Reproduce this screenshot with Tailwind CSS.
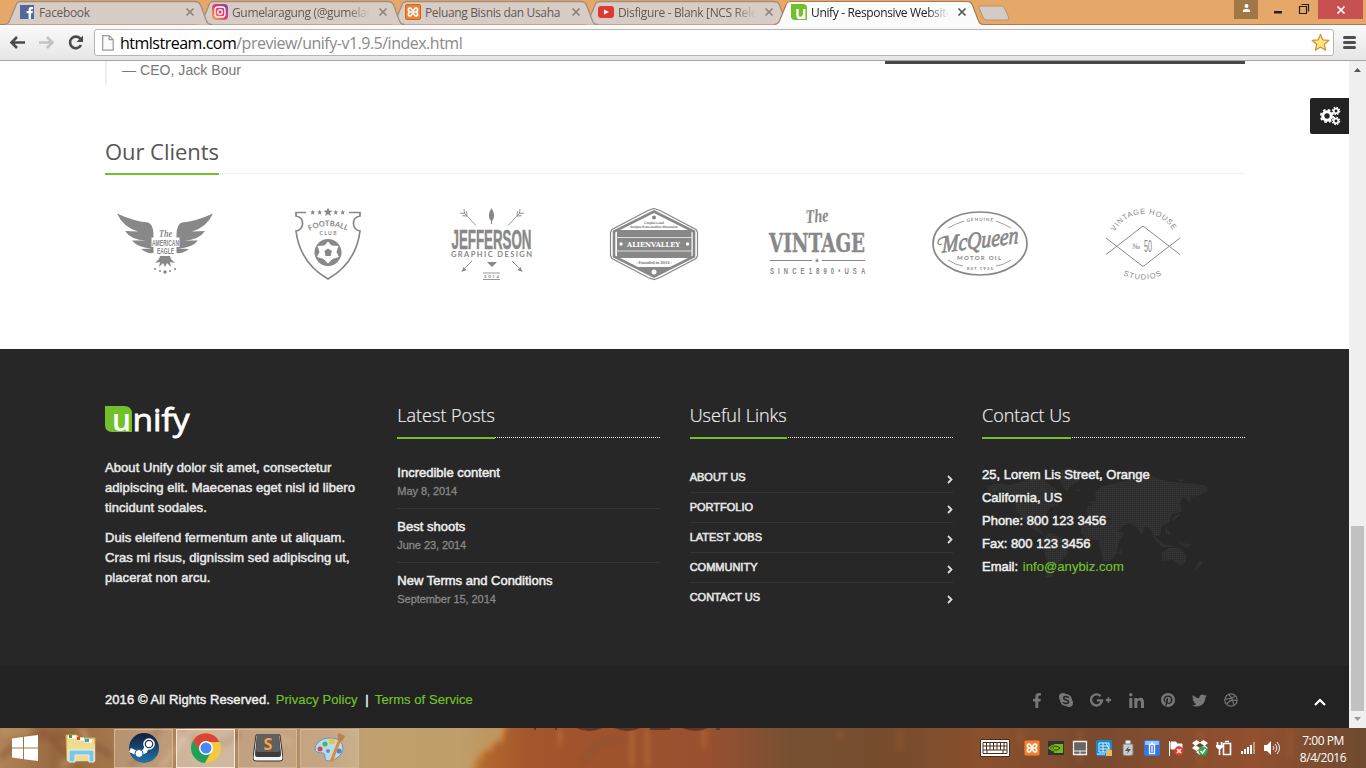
<!DOCTYPE html>
<html lang="en">
<head>
<meta charset="utf-8">
<title>Unify - Responsive Website Template</title>
<script src="https://cdn.jsdelivr.net/npm/@tailwindcss/browser@4"></script>
</head>
<body class="bg-white">
<svg class="hidden">
  <defs>
    <symbol id="x" viewBox="0 0 10 10"><path d="M1.500 1.500l7 7M8.500 1.500l-7 7" stroke="currentColor" stroke-width="1.700"/></symbol>
    <symbol id="xampp" viewBox="0 0 16 16"><rect x=".5" y=".5" width="15" height="15" rx="1.500" fill="#f08236" stroke="#cf6420"/><path d="M5.500 4.200C3 3.200 2.800 6.300 4.600 8C2.800 9.700 3 12.800 5.500 11.800M10.500 4.200C13 3.200 13.200 6.300 11.400 8C13.200 9.700 13 12.800 10.500 11.800M5.500 4.200C7 4.200 6.200 6.500 8 6.500S9 4.200 10.500 4.200M5.500 11.800C7 11.800 6.200 9.500 8 9.500S9 11.800 10.500 11.800M5 8h6" fill="none" stroke="#fff" stroke-width="1.700"/></symbol>
    <symbol id="tab" viewBox="0 0 210 25"><path d="M0 24.500C5 24 5 22 7 17L12 5C13 2 14 1.500 17 1.500H190C194 1.500 195 2 196.500 5L201 17C203 22 203 24.500 208 24.500" fill="#d8cdc6" stroke="#a38e7b" stroke-width="1.300"/></symbol>
    <symbol id="chev" viewBox="0 0 6 9"><path d="M1 1l3.500 3.500L1 8" fill="none" stroke="#ddd" stroke-width="1.800"/></symbol>
  </defs>
</svg>
<div class="flex h-[768px] w-[1366px] flex-col overflow-hidden bg-white">

  <!-- tab strip -->
  <div class="relative flex h-[25px] shrink-0 items-center border-b border-[#a87c50] bg-[#e5a868] pl-[20px] font-['Open_Sans',sans-serif] text-[12px] tracking-[-0.35px] text-[#635a53]">
    <svg class="absolute left-[583px] top-0 h-[25px] w-[210px]"><use href="#tab"/></svg>
    <svg class="absolute left-[390px] top-0 h-[25px] w-[210px]"><use href="#tab"/></svg>
    <svg class="absolute left-[197px] top-0 h-[25px] w-[210px]"><use href="#tab"/></svg>
    <svg class="absolute left-[4px] top-0 h-[25px] w-[210px]"><use href="#tab"/></svg>
    <svg class="absolute left-[774px] top-0 h-[26px] w-[240px]" viewBox="0 0 240 26"><path d="M0 26V24.500C5 24 5 22 7 17L12 5C13 2 14 1.500 17 1.500H192C196 1.500 197 2 198.500 5L203 17C205 22 205 24.500 210 24.500V26Z" fill="#fbfbfb"/><path d="M0 24.500C5 24 5 22 7 17L12 5C13 2 14 1.500 17 1.500H192C196 1.500 197 2 198.500 5L203 17C205 22 205 24.500 210 24.500" fill="none" stroke="#a87c50" stroke-width="1.200"/><path d="M206 6h22q2 0 3 3l4 9q0 2-2 2h-20q-3 0-4-3l-4-9q-.5-2 1-2z" fill="#d4cbc6" stroke="#b39373"/></svg>
    <div class="relative flex w-[193px] items-center">
      <svg class="h-[14px] w-[14px]" viewBox="0 0 14 14"><path d="M0 0h14v14H0z" fill="#56679b"/><path d="M8.600 14V8.300h-2V6h2V4.300Q8.600 2 11 2h2v2.200h-1.300q-.8 0-.8.900V6h2l-.3 2.300h-1.700V14z" fill="#fff"/></svg>
      <span class="ml-[5px] mt-[2px] w-[146px] whitespace-nowrap">Facebook</span><svg class="h-[10px] w-[10px] text-[#8c827c]"><use href="#x"/></svg>
    </div>
    <div class="relative flex w-[193px] items-center">
      <svg class="-ml-px h-4 w-4" viewBox="0 0 16 16"><defs><linearGradient id="ig" x1="0" y1="1" x2="1" y2="0"><stop stop-color="#fdb84c"/><stop offset=".5" stop-color="#e23c68"/><stop offset="1" stop-color="#7d42bd"/></linearGradient></defs><rect width="16" height="16" rx="4" fill="url(#ig)"/><rect x="3" y="3" width="10" height="10" rx="3" fill="none" stroke="#fff" stroke-width="1.300"/><circle cx="8" cy="8" r="2.300" fill="none" stroke="#fff" stroke-width="1.300"/></svg>
      <span class="ml-1 mt-[2px] w-[138px] overflow-hidden whitespace-nowrap [mask-image:linear-gradient(to_right,#000_84%,transparent)]">Gumelaragung (@gumelaragung)</span><svg class="ml-[8px] h-[10px] w-[10px] text-[#8c827c]"><use href="#x"/></svg>
    </div>
    <div class="relative flex w-[193px] items-center">
      <svg class="-ml-px h-4 w-4"><use href="#xampp"/></svg>
      <span class="ml-1 mt-[2px] w-[138px] overflow-hidden whitespace-nowrap">Peluang Bisnis dan Usaha</span><svg class="ml-[8px] h-[10px] w-[10px] text-[#8c827c]"><use href="#x"/></svg>
    </div>
    <div class="relative flex w-[193px] items-center">
      <svg class="-ml-px h-4 w-4" viewBox="0 0 16 16"><rect y="2" width="16" height="12" rx="3" fill="#dc3b32"/><path d="M6 5.500l5 2.500-5 2.500z" fill="#fff"/></svg>
      <span class="ml-1 mt-[2px] w-[138px] overflow-hidden whitespace-nowrap [mask-image:linear-gradient(to_right,#000_84%,transparent)]">Disfigure - Blank [NCS Release]</span><svg class="ml-[8px] h-[10px] w-[10px] text-[#8c827c]"><use href="#x"/></svg>
    </div>
    <div class="relative flex w-[193px] items-center text-[#222]">
      <svg class="-ml-px h-4 w-4" viewBox="0 0 16 16"><path d="M0 0h12q4 0 4 4v12H4q-4 0-4-4z" fill="#72c02c"/><path d="M6.500 5v6q0 3 2.500 3 3 0 3.500-2.500M13.200 5v10" fill="none" stroke="#fff" stroke-width="2.400"/></svg>
      <span class="ml-1 mt-[2px] w-[138px] overflow-hidden whitespace-nowrap [mask-image:linear-gradient(to_right,#000_84%,transparent)]">Unify - Responsive Website Template</span><svg class="ml-[8px] h-[10px] w-[10px] text-[#555]"><use href="#x"/></svg>
    </div>
    <div class="ml-auto mr-[3px] flex h-[19px] items-center self-start">
      <div class="flex h-full w-6 items-center justify-center bg-[#a27748]"><svg class="-mt-[3px] h-[9px] w-[9px]" viewBox="0 0 10 10" fill="#fff"><circle cx="5" cy="2.300" r="2.200"/><path d="M1 9V7.500q0-2 4-2t4 2V9z"/></svg></div>
      <svg class="h-[19px] w-[60px]" viewBox="0 0 60 19"><path d="M16 11h8v2.500h-8z" fill="#222"/><path d="M41.500 6.500h7v7h-7zM43.500 4.500h7v7" fill="none" stroke="#222" stroke-width="1.200"/></svg>
      <div class="flex h-full w-[45px] items-center justify-center bg-[#c75050] text-white"><svg class="h-[10px] w-[10px]"><use href="#x"/></svg></div>
    </div>
  </div>

  <!-- toolbar -->
  <div class="flex h-[36px] shrink-0 items-center border-b border-[#a5a5a5] bg-linear-to-b from-[#fafafa] to-[#e6e6e6] pl-[9px]">
    <svg class="h-[18px] w-[76px]" viewBox="9 34 76 18" fill="none" stroke-width="2.600"><path d="M25 42.500H12M17 37l-5.500 5.500L17 48" stroke="#4a4a4a"/><path d="M39 42.500h13M47 37l5.500 5.500L47 48" stroke="#c3c3c3"/><path d="M80.500 39a5.800 5.800 0 1 0 .5 6" stroke="#4a4a4a"/><path d="M83 35.500V42h-6.500z" fill="#4a4a4a"/></svg>
    <div class="ml-[9px] flex h-[27px] w-[1240px] items-center rounded-[3px] border border-[#b5b5b5] bg-white pl-[7px] font-['Open_Sans',sans-serif] text-[16px] leading-[22px] tracking-[-0.5px] text-[#8a8a8a]">
      <svg class="h-4 w-3" viewBox="0 0 12 16"><path d="M.7.700h6.500l4 4v10.500H.7zM7.200.700v4h4" fill="#fafafa" stroke="#999" stroke-width="1.200"/></svg>
      <span class="ml-[6px] whitespace-nowrap"><span class="text-black">htmlstream.com</span>/preview/unify-v1.9.5/index.html</span>
      <svg class="ml-auto mr-[3px] h-[19px] w-[19px]" viewBox="0 0 20 20"><path d="M10 1.500l2.500 5.700 6.200.6-4.700 4.100 1.400 6.100L10 14.800 4.600 18 6 11.900 1.300 7.800l6.200-.6z" fill="#ffe480" stroke="#cf9338" stroke-width="1.300" stroke-linejoin="round"/></svg>
    </div>
    <div class="ml-[9px] flex w-[13px] flex-col gap-[2px]"><i class="h-[3px] rounded bg-[#4f4f4f]"></i><i class="h-[3px] rounded bg-[#4f4f4f]"></i><i class="h-[3px] rounded bg-[#4f4f4f]"></i></div>
  </div>

  <div class="flex h-[667px] shrink-0">
    <main class="relative flex w-[1349px] flex-col font-['Liberation_Sans',Arial,sans-serif]">
      <div class="h-[288px] pl-[105px]">
        <div class="flex w-[1140px] items-start justify-between">
          <div class="h-[24px] border-l-2 border-[#eee] pl-[15px] text-[14px] leading-[18px] tracking-[0.05px] text-[#777]">— CEO, Jack Bour</div>
          <div class="h-[3px] w-[360px] bg-[#484848]"></div>
        </div>
        <div class="mt-[53px] h-[36px] w-[1140px] border-b border-dotted border-[#e4e4e4]">
          <h2 class="inline-block h-[37px] w-[114px] whitespace-nowrap border-b-2 border-[#72c02c] font-['Open_Sans',sans-serif] text-[22px] leading-[27px] tracking-[-0.05px] text-[#555]">Our Clients</h2>
        </div>
        <div class="mt-[26px] flex gap-[43px] text-[#888]">
          <svg class="h-[90px] w-[120px]" viewBox="105 200 120 90" fill="currentColor">
            <path id="wing" d="M117 213.500Q133 221 148 222.500Q153 224 153.500 234V253Q147 254 141 249L152 248.500Q138 248 132 240.500L146 240.500Q131 240 125 231L138 231.500Q123 227 117 213.500Z"/><use href="#wing" transform="translate(330 0) scale(-1 1)"/>
            <path d="M160 256h10l1 3 4 4-5-1 1 5-4-4-2 4-2-4-4 4 1-5-5 1 4-4z"/><circle cx="155" cy="269" r="1"/><circle cx="160" cy="271" r="1"/><circle cx="165" cy="272" r="1.700"/><circle cx="170" cy="271" r="1"/><circle cx="175" cy="269" r="1"/>
            <path d="M151.500 237.500h28v9.500h-28zM156 246.500h18v8h-18z" fill="#fff"/>
            <text x="159" y="237" font-family="Liberation Serif" font-style="italic" font-weight="bold" font-size="10" textLength="13" lengthAdjust="spacingAndGlyphs">The</text>
            <text x="152" y="246" font-family="Liberation Sans" font-weight="bold" font-size="9.500" textLength="27" lengthAdjust="spacingAndGlyphs">AMERICAN</text>
            <text x="157" y="254" font-family="Liberation Sans" font-weight="bold" font-size="9" textLength="17" lengthAdjust="spacingAndGlyphs">EAGLE</text>
          </svg>
          <svg class="h-[90px] w-[120px]" viewBox="268 200 120 90" fill="currentColor">
            <path d="M306 212.500H296V216Q303 217 302.500 224Q302 230 296 231Q300 263 328 279Q356 263 360 231Q354 230 353.500 224Q353 217 360 216V212.500H349" fill="none" stroke="currentColor" stroke-width="1.700"/>
            <path id="star" d="M328 207.500l1.300 3 3.200.2-2.500 2 .8 3.200-2.800-1.700-2.800 1.700.8-3.200-2.500-2 3.200-.2z"/><use href="#star" transform="translate(132.300 85.200) scale(.55 .6)"/><use href="#star" transform="translate(139.300 85.200) scale(.55 .6)"/><use href="#star" transform="translate(155.300 85.200) scale(.55 .6)"/><use href="#star" transform="translate(162.300 85.200) scale(.55 .6)"/>
            <path id="arc1" d="M309.500 231Q328 221 347.500 231" fill="none"/><text font-family="Lato" font-weight="bold" font-size="7.500"><textPath href="#arc1" textLength="39">FOOTBALL</textPath></text>
            <text x="319.500" y="234.500" font-family="Lato" font-weight="bold" font-size="5" textLength="17">CLUB</text>
            <circle cx="328" cy="252.500" r="13.500"/><path d="M328 241.500l3.500 4 7 .5-2 6 2.500 5-6.500 2-4.500 4.500-4.500-4.500-6.500-2 2.500-5-2-6 7-.5z" fill="#fff"/><path d="M324.500 251l3.500-2.500 4 2.500-1.500 5h-5z"/>
          </svg>
          <svg class="h-[90px] w-[120px]" viewBox="431 200 120 90" fill="currentColor">
            <path d="M491.500 208q4.500 7 1.300 12l-.8 1v3h-1v-3l-.8-1q-3.200-5 1.300-12zM487 262h10l-5 5z"/>
            <path d="M476 225.500L464.500 213.500l-4.500-.3M464.500 213.500l-.5-4.500M467 216l-4.500-.3M467 216l-.5-4.500M508 225.500L519.500 213.500l4.500-.3M519.500 213.500l.5-4.500M517 216l4.500-.3M517 216l.5-4.500M472 261l-9 9M512 261l9 9M483 273h17M483 279.500h17" fill="none" stroke="currentColor" stroke-width=".9"/><path d="M461.500 272l2-5 3 3zM522.500 272l-2-5-3 3z"/>
            <text x="451.500" y="248.500" font-family="Liberation Sans" font-weight="bold" font-size="27" textLength="80" lengthAdjust="spacingAndGlyphs" stroke="currentColor" stroke-width=".5">JEFFERSON</text>
            <text x="451" y="257.300" font-family="Lato" font-weight="bold" font-size="7.500" textLength="81">GRAPHIC DESIGN</text><text x="484" y="278" font-family="Lato" font-weight="bold" font-size="4.500" textLength="15">2014</text>
          </svg>
          <svg class="h-[90px] w-[120px]" viewBox="594 200 120 90" fill="currentColor">
            <path d="M654 208.500l6 2 36 19 1.500 3v23l-1.500 3-36 19-6 2-6-2-36-19-1.500-3v-23l1.500-3 36-19z" fill="#fff" stroke="currentColor" stroke-width="1.200"/>
            <path d="M654 211.500l40 20v25l-40 20-40-20v-25z" fill="#fff" stroke="currentColor" stroke-width="2.600"/><path d="M635 267h38l-19 10zM617 230h74.500v28H617z"/><path d="M616 237.500h77M616 251h77" stroke="#ddd"/>
            <circle cx="654" cy="217.500" r="2"/><circle cx="654" cy="272" r="2.500" fill="#fff"/><circle cx="621" cy="244" r="1.700" fill="#fff"/><circle cx="687.500" cy="244" r="1.700" fill="#fff"/>
            <text x="627" y="247" font-family="DejaVu Serif" font-weight="bold" fill="#fff" font-size="8" textLength="53" lengthAdjust="spacingAndGlyphs">ALIENVALLEY</text>
            <g font-family="DejaVu Serif" font-weight="bold" font-size="3.300"><text x="644" y="223.500" textLength="20">Graphics and</text><text x="630" y="227.500" textLength="48">designs from another dimension</text><text x="636" y="264" font-size="4" textLength="36">- Founded in 2014 -</text></g>
          </svg>
          <svg class="h-[90px] w-[120px]" viewBox="757 200 120 90" fill="currentColor">
            <text transform="translate(806 223) rotate(-4)" font-family="Liberation Serif" font-style="italic" font-weight="bold" font-size="19" textLength="23" lengthAdjust="spacingAndGlyphs">The</text>
            <text x="769" y="251.500" font-family="DejaVu Serif" font-weight="bold" font-size="26" textLength="96" lengthAdjust="spacingAndGlyphs" stroke="currentColor" stroke-width=".4">VINTAGE</text>
            <path d="M770 260.500h42M822 260.500h43" stroke="currentColor" stroke-width="1.200"/><use href="#star" transform="translate(653 154.500) scale(.5)"/>
            <g transform="translate(770 273.800) scale(.7 1)"><text font-family="Liberation Sans" font-size="8.500" font-weight="bold" textLength="136">SINCE1890•USA</text></g>
          </svg>
          <svg class="h-[90px] w-[120px]" viewBox="920 200 120 90" fill="currentColor">
            <ellipse cx="980" cy="243.500" rx="47" ry="31.500" fill="none" stroke="currentColor" stroke-width="1.700"/>
            <path id="q1" d="M967 222q13-2.500 28 0" fill="none"/><text font-size="4.500" font-family="Lato" font-weight="bold"><textPath href="#q1" textLength="26">GENUINE</textPath></text>
            <text x="967" y="270" font-size="4.500" font-family="Lato" font-weight="bold" textLength="26">EST.1935</text>
            <path d="M948 228q7-4 16-7M1011 228q-7-4-15-7M948 260q7 5 15 6M1011 260q-7 5-15 6" fill="none" stroke="currentColor" stroke-width=".8"/>
            <text transform="translate(942 252.500) rotate(-7) skewX(-8)" font-family="Liberation Serif" font-style="italic" font-size="24" textLength="77" lengthAdjust="spacingAndGlyphs" stroke="currentColor" stroke-width=".8">McQueen</text>
            <path d="M947 237q-8 0-9 5 0 4 4 2" fill="none" stroke="currentColor" stroke-width="1.300"/>
            <text x="957" y="259.500" font-size="6" font-family="Lato" font-weight="bold" textLength="44">MOTOR OIL</text>
          </svg>
          <svg class="h-[90px] w-[120px]" viewBox="1083 200 120 90" fill="currentColor">
            <path d="M1106 238l37 28.500L1180 238M1106 254.500l37-28.500 37 28.500" fill="none" stroke="currentColor" stroke-width="1"/>
            <path id="v1" d="M1115 231.500A33 33 0 0 1 1172 229" fill="none"/><text font-family="Liberation Sans Narrow,Liberation Sans" font-size="7.500"><textPath href="#v1" textLength="70">VINTAGE HOUSE</textPath></text>
            <path id="v2" d="M1123 275q20 9 39 0" fill="none"/><text font-family="Liberation Sans Narrow,Liberation Sans" font-size="7.500"><textPath href="#v2" textLength="40">STUDIOS</textPath></text>
            <text x="1132" y="248.500" font-size="8" font-family="Liberation Serif" textLength="8" lengthAdjust="spacingAndGlyphs">№</text><text x="1144" y="252" font-size="16" font-family="Liberation Sans" textLength="8" lengthAdjust="spacingAndGlyphs">50</text>
          </svg>
        </div>
      </div>

      <!-- floating controls -->
      <div class="absolute right-0 top-[37px] flex h-[36px] w-[39px] items-center justify-center rounded-l-[2px] bg-[#222]">
        <svg class="h-5 w-[22px]" viewBox="0 0 22 20" fill="none" stroke="#fff"><circle cx="8" cy="10" r="4.200" stroke-width="3"/><circle cx="8" cy="10" r="6.200" stroke-width="1.800" stroke-dasharray="2.600 2.270"/><circle cx="17" cy="5" r="2.300" stroke-width="1.700"/><circle cx="17" cy="5" r="3.700" stroke-width="1.200" stroke-dasharray="1.600 1.300"/><circle cx="17" cy="15" r="2.300" stroke-width="1.700"/><circle cx="17" cy="15" r="3.700" stroke-width="1.200" stroke-dasharray="1.600 1.300"/></svg>
      </div>

      <!-- footer -->
      <footer class="grid h-[317px] grid-cols-4 gap-[29.33px] border-b border-[#252525] bg-[#272727] pl-[105px] pr-[104px] pt-[56px] text-[13px] text-[#eee]">
        <section>
          <svg class="mt-px h-[34px] w-[90px]" viewBox="0 0 90 34"><path d="M0 0h19q8 0 8 8v18H7q-7 0-7-7z" fill="#72c02c"/><g font-family="Open Sans" font-size="31" fill="#fff"><text x="7" y="25" font-weight="600" textLength="19" lengthAdjust="spacingAndGlyphs">u</text><text x="27.500" y="25" textLength="57" lengthAdjust="spacingAndGlyphs" stroke="#fff" stroke-width=".8">nify</text></g></svg>
          <div class="mt-[18px] whitespace-nowrap leading-[20px] tracking-[0.08px] [-webkit-text-stroke:0.5px_#e4e4e4]">
            <p>About Unify dolor sit amet, consectetur<br>adipiscing elit. Maecenas eget nisl id libero<br>tincidunt sodales.</p>
            <p class="mt-[10px]">Duis eleifend fermentum ante ut aliquam.<br>Cras mi risus, dignissim sed adipiscing ut,<br>placerat non arcu.</p>
          </div>
        </section>
        <section>
          <div class="h-[33px] border-b border-dotted border-white"><h3 class="h-[34px] w-[98px] whitespace-nowrap border-b-2 border-[#72c02c] font-['Open_Sans',sans-serif] text-[18px] font-light leading-[21px] [-webkit-text-stroke:0.2px]">Latest Posts</h3></div>
          <div class="mt-[25px] whitespace-nowrap [-webkit-text-stroke:0.5px]">
            <div class="h-[46px] border-b border-[#353535]"><p class="leading-[19px]">Incredible content</p><p class="text-[11px] leading-[19px] tracking-[-0.07px] text-[#888] [-webkit-text-stroke:0.3px]">May 8, 2014</p></div>
            <div class="h-[54px] border-b border-[#353535] pt-[8px]"><p class="leading-[19px]">Best shoots</p><p class="text-[11px] leading-[19px] tracking-[-0.07px] text-[#888] [-webkit-text-stroke:0.3px]">June 23, 2014</p></div>
            <div class="h-[54px] pt-[8px]"><p class="leading-[19px]">New Terms and Conditions</p><p class="text-[11px] leading-[19px] tracking-[-0.07px] text-[#888] [-webkit-text-stroke:0.3px]">September 15, 2014</p></div>
          </div>
        </section>
        <section>
          <div class="h-[33px] border-b border-dotted border-white"><h3 class="h-[34px] w-[97px] whitespace-nowrap border-b-2 border-[#72c02c] font-['Open_Sans',sans-serif] text-[18px] font-light leading-[21px] [-webkit-text-stroke:0.2px]">Useful Links</h3></div>
          <div class="mt-[25px] text-[11px] leading-[28px] [-webkit-text-stroke:0.55px_#e4e4e4]">
            <div class="flex h-[30px] items-start justify-between border-b border-[#353535]">ABOUT US<svg class="mt-[12px] h-[9px] w-[6px]"><use href="#chev"/></svg></div>
            <div class="flex h-[30px] items-start justify-between border-b border-[#353535]">PORTFOLIO<svg class="mt-[12px] h-[9px] w-[6px]"><use href="#chev"/></svg></div>
            <div class="flex h-[30px] items-start justify-between border-b border-[#353535]">LATEST JOBS<svg class="mt-[12px] h-[9px] w-[6px]"><use href="#chev"/></svg></div>
            <div class="flex h-[30px] items-start justify-between border-b border-[#353535]">COMMUNITY<svg class="mt-[12px] h-[9px] w-[6px]"><use href="#chev"/></svg></div>
            <div class="flex h-[30px] items-start justify-between">CONTACT US<svg class="mt-[12px] h-[9px] w-[6px]"><use href="#chev"/></svg></div>
          </div>
        </section>
        <section>
          <div class="h-[33px] border-b border-dotted border-white"><h3 class="h-[34px] w-[89px] whitespace-nowrap border-b-2 border-[#72c02c] font-['Open_Sans',sans-serif] text-[18px] font-light leading-[21px] [-webkit-text-stroke:0.2px]">Contact Us</h3></div>
          <div class="relative mt-[25px]">
            <svg class="absolute left-0 top-0 h-[120px] w-[263px]" viewBox="36 219 789 360"><defs><pattern id="dots" width="6" height="6" patternUnits="userSpaceOnUse"><path d="M0 0h6v6H0z" fill="#2b2b2b"/><path d="M0 0h4v4H0z" fill="#363636"/></pattern></defs>
              <path fill="url(#dots)" d="M50 290L75 280L120 285L170 270L215 265L240 285L260 300L255 320L262 345L240 355L230 365L225 395L235 402L205 398L200 408L230 440L200 425L170 400L150 375L138 360L135 335L125 310L95 300L60 315ZM265 245L290 233L330 240L325 275L305 285L290 305L275 285ZM232 430L255 432L280 450L302 465L290 495L270 515L255 530L245 563L228 560L230 510L215 455ZM375 310L390 290L480 270L520 245L560 265L600 275L700 285L717 300L690 315L665 320L660 338L640 320L630 340L635 365L605 372L598 395L575 410L570 435L552 440L540 415L525 408L515 435L500 410L480 400L465 405L440 425L425 385L350 375L350 350L370 345L355 335L380 330ZM340 385L430 390L445 425L465 428L445 460L440 490L420 513L400 513L385 450L345 445L332 425ZM575 490L595 475L625 472L650 495L645 515L632 527L610 510L578 512ZM675 540L700 520L688 510ZM605 395L630 375L630 368L612 380ZM540 430L580 462L620 468L575 472ZM588 410L602 435L588 430ZM620 455L662 463L650 475ZM445 485L457 475L450 495ZM316 300L328 295L330 308ZM618 265L645 268L635 278Z"/></svg>
            <address class="relative whitespace-nowrap not-italic leading-[23px] [-webkit-text-stroke:0.5px]">25, Lorem Lis Street, Orange<br>California, US<br>Phone: 800 123 3456<br>Fax: 800 123 3456<br>Email: <span class="ml-px tracking-[0.08px] text-[#72c02c] [-webkit-text-stroke:0.2px]">info@anybiz.com</span></address>
          </div>
        </section>
      </footer>
      <div class="flex h-[62px] items-center bg-[#222] pl-[105px] text-[13px] text-[#eee]">
        <p class="mt-[5px] whitespace-nowrap tracking-[0.08px] [-webkit-text-stroke:0.45px]">2016 © All Rights Reserved. <span class="ml-[2px] text-[#72c02c] [-webkit-text-stroke:0.2px]">Privacy Policy</span> <span class="ml-[4px] mr-[3px]">|</span><span class="ml-[3px] text-[#72c02c] [-webkit-text-stroke:0.2px]">Terms of Service</span></p>
        <div class="ml-auto mr-[111px] mt-[6px] flex items-center gap-[17px] text-[#777]">
          <svg class="h-[15px] w-[10px]" viewBox="0 0 320 512" fill="currentColor"><path d="M279 288l14-93h-89v-60c0-25 13-50 53-50h40V6S260 0 225 0c-73 0-121 44-121 125v70H23v93h81v224h100V288z"/></svg>
          <svg class="h-[14px] w-[14px]" viewBox="0 0 14 14"><circle cx="4" cy="4" r="4" fill="currentColor"/><circle cx="10" cy="10" r="4" fill="currentColor"/><circle cx="7" cy="7" r="6" fill="currentColor"/><path d="M9.700 5C9 3.200 4.700 3 4.700 5.200S9.700 6.700 9.700 8.800S5 11 4.200 9" fill="none" stroke="#222" stroke-width="1.500"/></svg>
          <svg class="h-[14px] w-[22px]" viewBox="0 0 22 14" fill="none" stroke="currentColor" stroke-width="2.400"><path d="M10.500 3.100A5.500 5.500 0 1 0 12 7.400H6.800"/><path d="M18.400 4.300v5.400M15.700 7h5.400" stroke-width="1.800"/></svg>
          <svg class="h-[15px] w-[15px]" viewBox="0 0 448 448" fill="currentColor"><path d="M100 448H7V149h93zM54 108a54 54 0 1 1 0-108 54 54 0 0 1 0 108zM448 448h-93V302c0-34-1-79-48-79-49 0-56 38-56 77v148h-93V149h89v41h2c12-24 42-49 87-49 94 0 112 62 112 143z"/></svg>
          <svg class="h-[14px] w-[14px]" viewBox="0 8 496 496" fill="currentColor"><path d="M496 256c0 137-111 248-248 248-25.600 0-50.200-3.900-73.400-11.100 10.100-16.500 25.200-43.500 30.800-65 3-11.600 15.400-59 15.400-59 8.100 15.400 31.700 28.500 56.800 28.500 74.800 0 128.700-68.800 128.700-154.300 0-81.900-66.900-143.200-152.900-143.200-107 0-163.900 71.800-163.900 150.100 0 36.400 19.400 81.700 50.300 96.100 4.700 2.200 7.200 1.200 8.300-3.300.8-3.400 5-20.300 6.900-28.100.6-2.500.3-4.700-1.700-7.100-10.100-12.500-18.300-35.300-18.300-56.600 0-54.700 41.400-107.600 112-107.600 60.900 0 103.600 41.500 103.600 100.900 0 67.100-33.900 113.600-78 113.600-24.300 0-42.600-20.100-36.700-44.800 7-29.500 20.500-61.300 20.500-82.600 0-19-10.200-34.900-31.400-34.900-24.900 0-44.900 25.700-44.900 60.200 0 22 7.400 36.800 7.400 36.800s-24.500 103.800-29 123.200c-5 21.400-3 51.600-.9 71.200C65.400 450.900 0 361.100 0 256 0 119 111 8 248 8s248 111 248 248z"/></svg>
          <svg class="h-[15px] w-[15px]" viewBox="0 0 512 512" fill="currentColor"><path d="M459 152c.3 4.500.3 9 .3 13.600 0 138.700-105.600 298.600-298.600 298.600-59.400 0-114.700-17.200-161.100-47.100 57 6 114-10 155.600-43.500-46-1-84.800-31.200-98-72.800 16 2.500 32 2 47.300-2-48-9.700-84-52-84-103v-1.300c14 7.800 30.200 12.700 47.400 13.300C15 175 6 115 35.600 67c51.700 63.700 129.300 105.300 216.400 109.800C236 109 286 48 354.300 48c30.200 0 57.500 12.700 76.700 33.100 23.700-4.500 46.500-13.300 66.600-25.300-7.800 24.400-24.400 44.800-46.100 57.800 21-2.300 41.600-8 60.400-16.200-14.300 20.800-32.200 39.300-52.900 54.600z"/></svg>
          <svg class="h-[14px] w-[14px]" viewBox="0 0 14 14" fill="none" stroke="currentColor" stroke-width="1.200"><circle cx="7" cy="7" r="6.200"/><path d="M4.700 1.300Q9 6 9.900 12.500M.9 6Q8 6.500 11.300 2.700M2.700 11.300Q6 6 13 7.600"/></svg>
        </div>
      </div>
      <svg class="absolute right-[22px] top-[636px] h-[10px] w-[14px]" viewBox="0 0 14 10"><path d="M2 8l5-5 5 5" fill="none" stroke="#fff" stroke-width="2.200"/></svg>
    </main>
    <div class="flex w-[17px] flex-col items-center bg-[#f0f0f0]">
      <svg class="mt-[7px] h-[4px] w-[7px]" viewBox="0 0 7 4"><path d="M0 4L3.500 0 7 4z" fill="#555"/></svg>
      <div class="mt-[454px] h-[185px] w-[13px] bg-[#c1c1c1]"></div>
      <svg class="mt-[6px] h-[4px] w-[7px]" viewBox="0 0 7 4"><path d="M0 0h7L3.500 4z" fill="#999"/></svg>
    </div>
  </div>

  <!-- taskbar -->
  <div class="relative flex h-[40px] shrink-0 items-center overflow-hidden bg-[#8b5230]">
    <svg class="absolute inset-0 h-[40px] w-[1366px]" viewBox="0 0 1366 40" preserveAspectRatio="none"><defs><linearGradient id="bg"><stop stop-color="#b08458"/><stop offset=".04" stop-color="#98693f"/><stop offset=".12" stop-color="#ad8258"/><stop offset=".18" stop-color="#b38a62"/><stop offset=".24" stop-color="#b88f63"/><stop offset=".27" stop-color="#c0a274"/><stop offset=".335" stop-color="#bd9d68"/><stop offset=".355" stop-color="#b1672e"/><stop offset=".39" stop-color="#a3552b"/><stop offset=".52" stop-color="#985030"/><stop offset=".58" stop-color="#765032"/><stop offset=".66" stop-color="#784c2d"/><stop offset=".72" stop-color="#8a502c"/><stop offset=".8" stop-color="#794a2f"/><stop offset=".92" stop-color="#92502f"/><stop offset="1" stop-color="#6d4a30"/></linearGradient><filter id="b"><feGaussianBlur stdDeviation="2.500 3"/></filter></defs>
      <path d="M0 0h1366v40H0z" fill="url(#bg)"/>
      <g filter="url(#b)" fill="none"><path d="M0 30Q30 0 70 10T110 30M40 0L80 40M130 40L160 0M180 0Q210 30 240 5" stroke="#865333" stroke-width="6" opacity=".6"/><path d="M80 0Q100 20 60 38M0 3h30M160 40l30-36M256 35q20-30 36-20" stroke="#d4b27c" stroke-width="5" opacity=".5"/><path d="M366 -5H508L500 12 490 20 478 28 470 45H366Z" fill="#c0a06c" opacity=".85"/><path d="M474 42V30M482 32V20M491 24V10M502 14V0" stroke="#dc8a35" stroke-width="4" opacity=".7"/><path d="M632 0V40M647 0V40M704 0V20M560 0V18" stroke="#c9793c" stroke-width="2.500" opacity=".8"/><path d="M583 35Q600 5 625 12" stroke="#785038" stroke-width="7" opacity=".25"/><path d="M900 0V22M840 0V12M1020 0V18M1080 0V33M1200 0V40M1290 0V30" stroke="#aa6035" stroke-width="6" opacity=".3"/></g>
      <path d="M576 0h26q-12 6-26 0M614 0h26q-12 6-26 0M650 0h20v2h-20zM682 0h26q-12 6-26 0M534 0h2v2h-2zM555 0h2v2h-2zM716 0h4v2h-4z" fill="#542f20" opacity=".8"/></svg>
    <div class="relative flex items-center pl-[12px]">
      <svg class="h-[26px] w-[26px]" viewBox="0 0 26 26" fill="#fff"><path d="M0 3.500L11 2v10.500H0zM12 1.800L26 0v12.500H12zM0 13.500h11V24L0 22.500zM12 13.500h14V26l-14-1.800z"/></svg>
      <svg class="ml-[27px] h-[32px] w-[32px]" viewBox="0 0 32 32"><path d="M1 3h11l2 3h16v23H2z" fill="#efdb8c" stroke="#c6a850"/><path d="M3 5h8M12 7h7M20 9h7" stroke="#fff" stroke-width="3"/><path d="M4 3h3v3H4z" fill="#33a348"/><path d="M12 5h3v3h-3z" fill="#d6443a"/><path d="M20 7h4v3h-4z" fill="#3c9be0"/><path d="M2 12h28v17H2z" fill="#eedc91"/><path d="M4 30V18h25v12h-5V23H10v7z" fill="#82c4e5" stroke="#e1f4ff"/></svg>
      <div class="ml-[17px] flex gap-[3px]">
        <div class="flex h-[39px] w-[59px] items-center justify-center border border-[#d2b69a] bg-white/20"><svg class="h-[30px] w-[30px]" viewBox="0 0 30 30"><defs><linearGradient id="st" x2="0" y2="1"><stop stop-color="#101c38"/><stop offset="1" stop-color="#2176ac"/></linearGradient></defs><circle cx="15" cy="15" r="15" fill="url(#st)"/><path d="M1 17l9 4M10 21l6-3 3-7" stroke="#fff" stroke-width="4.500" fill="none"/><circle cx="20" cy="11" r="5.800" fill="#fff"/><circle cx="20" cy="11" r="3.700" fill="#fff" stroke="#1d3557" stroke-width="1.200"/><circle cx="10" cy="20.500" r="4" fill="#fff" stroke="#1d5580"/></svg></div>
        <div class="flex h-[39px] w-[59px] items-center justify-center border border-[#f4e6d8] bg-white/40"><svg class="h-[30px] w-[30px]" viewBox="0 0 30 30"><circle cx="15" cy="15" r="15" fill="#f4c840"/><path d="M2 7.500A15 15 0 0 0 14 30l6.500-12L15 15 9.500 18z" fill="#20a05a"/><path d="M2 7.500L9 18 15 9h13.500A15 15 0 0 0 2 7.500" fill="#dc4437"/><circle cx="15" cy="15" r="7" fill="#fff"/><circle cx="15" cy="15" r="5.500" fill="#4688f4"/></svg></div>
        <div class="flex h-[39px] w-[59px] items-center justify-center border border-[#d2b69a] bg-white/20"><svg class="h-[30px] w-[30px]" viewBox="0 0 30 30"><path d="M3 2h24l3 23q0 3-3 3H3q-3 0-3-3z" fill="#f4f4f4" stroke="#333"/><path d="M4 1h22l2 20q0 3-2 3H4q-2 0-2-3z" fill="#3c3c3c"/><path d="M4 1h22l1 16q0 2-2 2H5q-2 0-2-2z" fill="#5f5f5f"/><text x="15" y="16.500" text-anchor="middle" font-family="Open Sans" font-weight="bold" font-size="16" fill="#ffa23e">S</text></svg></div>
        <div class="flex h-[39px] w-[59px] items-center justify-center border border-[#d2b69a] bg-white/20"><svg class="h-[30px] w-[32px]" viewBox="0 0 32 30"><path d="M2 12Q7 4 18 5T29 16Q27 26 15 28Q10 28 11 23Q11 19 6 20Q-1 19 2 12Z" fill="#b4dcf1" stroke="#6496b4"/><circle cx="6" cy="16" r="2.500" fill="#d74350"/><circle cx="11" cy="11" r="2.500" fill="#52b257"/><circle cx="18" cy="8.500" r="3" fill="#f0c33a"/><circle cx="14" cy="18" r="2" fill="#768c9b"/><circle cx="25" cy="18" r="2.500" fill="#408bd0"/><path d="M17 29L26 6" stroke="#e6872d" stroke-width="3"/><path d="M24 7q-1-6 1-7l6 3q-2 5-5 6z" fill="#ba8250"/></svg></div>
      </div>
    </div>
    <div class="relative ml-auto flex items-center gap-[8px] pr-[19px]">
      <svg class="mr-[6px] h-[18px] w-[30px]" viewBox="0 0 30 18"><path d="M.5.500h29v17H.5z" fill="#fff" stroke="#4b2c1e"/><path d="M3 3.500h24v11H3zM3 7h24M3 11h24M6.500 3v8M10 3v8M13.500 3v8M17 3v8M20.500 3v8M24 3v8M7 11v4M23 11v4" fill="none" stroke="#4b2c1e"/></svg>
      <svg class="h-4 w-4"><use href="#xampp"/></svg>
      <svg class="h-4 w-4" viewBox="0 0 16 16"><path d="M0 1h16v14H0z" fill="#2c3438"/><path d="M6 4h9v9H6z" fill="#76b900"/><path d="M1 8q5-6 11 0-5 6-11 0zM3.500 8q4-3.500 6 0-3 3-6 0" fill="none" stroke="#76b900" stroke-width="1.200"/><path d="M6 6q4 0 6 2-3 3-6 2" fill="none" stroke="#2c3438"/></svg>
      <svg class="h-4 w-4" viewBox="0 0 16 16"><path d="M1.500 1.500h13v13h-13z" fill="#666" stroke="#eee" stroke-width="1.300"/><path d="M2 11h12M8 11v3" stroke="#eee"/></svg>
      <svg class="h-4 w-4" viewBox="0 0 16 16"><rect width="16" height="16" rx="2" fill="#178bd2"/><path d="M3 3h10v9H3zM4 6h8M4 9h8M7 3v9M10 3l3 6M1 14h8" fill="none" stroke="#dff3ff"/><path d="M10 10h6v6h-6z" fill="#e0bc60"/></svg>
      <svg class="h-4 w-4" viewBox="0 0 16 16"><path d="M5 0h6v5H5z" fill="#eee" stroke="#555"/><path d="M3 4h10v11q-5 2-10 0z" fill="#ccc" stroke="#777"/><path d="M9 6l-4 5h3l-1 3 4-5H8z" fill="#555"/></svg>
      <svg class="h-4 w-4" viewBox="0 0 16 16"><rect width="16" height="16" rx="2" fill="#3279e8"/><path d="M1 1h14v4H1z" fill="#9bc0fb"/><path d="M5.500 4.500h5v9h-5zM7 3h2M8 6v6" fill="none" stroke="#fff" stroke-width="1.300"/></svg>
      <svg class="h-4 w-4" viewBox="0 0 16 16"><path d="M1.500 1v15M3 2h5l1 2h5v7H8L7 9H3z" fill="#fff" stroke="#fff"/><circle cx="11" cy="11" r="4.700" fill="#e33830"/><path d="M9 9l4 4M13 9l-4 4" stroke="#fff" stroke-width="1.500"/></svg>
      <svg class="h-4 w-4" viewBox="0 0 16 16"><path d="M4.500 0L8 2.500 11.500 0 16 3l-3 2.500L16 8l-4.500 3L8 8.500 4.500 11 0 8l3-2.500L0 3zM4 12l4-2.500 4 2.500-4 3z" fill="#fff"/><path d="M8 3L12 5.500 8 8 4 5.500z" fill="#70452f"/><circle cx="11" cy="11" r="4.500" fill="#29ac4b"/><path d="M8.500 11l2 2 3-4" fill="none" stroke="#fff" stroke-width="1.500"/></svg>
      <svg class="h-4 w-4" viewBox="0 0 16 16"><path d="M7.500 3.500h7v11h-7zM9 1.500h4M3.500 8v7M1.500 2v4M5.500 2v4" fill="none" stroke="#fff" stroke-width="1.600"/><path d="M0 5h7v2L5 9H2L0 7z" fill="#fff"/></svg>
      <svg class="h-4 w-4" viewBox="0 0 16 16"><path d="M1 11h2v3H1zM4 9h2v5H4zM7 7h2v7H7zM10 5h2v9h-2z" fill="#fff"/><path d="M13 2h2v12h-2z" fill="#b69c8c"/></svg>
      <svg class="h-4 w-4" viewBox="0 0 16 16"><path d="M0 5h3l4-4v14l-4-4H0z" fill="#fff"/><path d="M9 6q2 2 0 4M11 4q3.500 4 0 8M13 2q5 6 0 12" fill="none" stroke="#eee"/></svg>
      <div class="ml-[11px] mt-px w-[48px] whitespace-nowrap text-center font-['Open_Sans',sans-serif] text-[12px] leading-[17px] tracking-[-0.45px] text-white">7:00 PM<br>8/4/2016</div>
    </div>
  </div>
</div>
</body>
</html>
